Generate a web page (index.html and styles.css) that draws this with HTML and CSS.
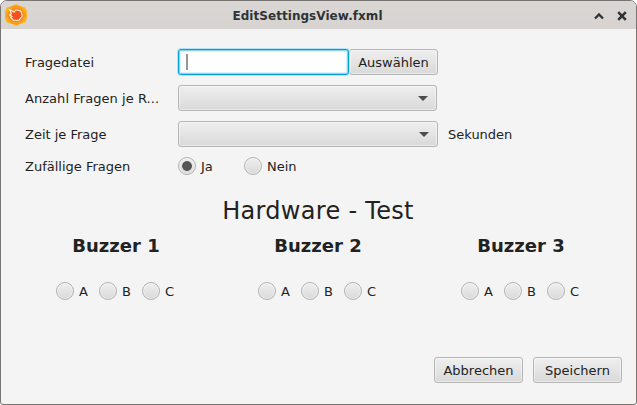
FILE: index.html
```html
<!DOCTYPE html>
<html lang="de">
<head>
<meta charset="utf-8">
<title>EditSettingsView.fxml</title>
<link rel="stylesheet" href="styles.css">
</head>
<body>
<div class="window">
  <header class="titlebar">
    <svg class="app-icon" width="24" height="24" viewBox="0 0 24 24">
      <path d="M8 3 12 1 16 3 21 4.5 22.8 8 23 12 22.8 16 21 19.5 16 21 12 23 8 21 3 19.5 1.2 16 1 12 1.2 8 3 4.5Z" fill="#fcb017"/>
      <path d="M8 3h8l3 4 3.500 5-3.500 5-3 4H8l-3-4-3.500-5L5 7Z" fill="#f99c1c"/>
      <path d="M5.500 7 12 4.500 18.500 7 20 12 18.500 17 12 19.500 5.500 17 4 12Z" fill="#f68a24"/>
      <path d="M5.500 6.500 10.300 9.300 12 6.800 17 8.300 18.300 13 15 17.200 9.500 17.200 6.500 14.500 8.200 13.500 5.500 12 7.500 10.800Z" fill="#f4511e" stroke="#fff0dc" stroke-width="1.100" stroke-linejoin="round"/>
    </svg>
    <h1 class="title">EditSettingsView.fxml</h1>
    <div class="controls">
      <svg width="10" height="10" viewBox="0 0 10 10"><path d="M1 7.500 5 3.500 9 7.500" fill="none" stroke="#2e3436" stroke-width="2.400"/></svg>
      <svg width="10" height="10" viewBox="0 0 10 10"><path d="M1.200 1.200 8.800 8.800M8.800 1.200 1.200 8.800" fill="none" stroke="#2e3436" stroke-width="2.600"/></svg>
    </div>
  </header>
  <main class="content">
    <div class="row">
      <span class="label">Fragedatei</span>
      <div class="field"><span class="caret"></span></div>
      <button class="button choose">Auswählen</button>
    </div>
    <div class="row">
      <span class="label wide">Anzahl Fragen je R...</span>
      <div class="combo narrow"><span class="arrow"></span></div>
    </div>
    <div class="row">
      <span class="label">Zeit je Frage</span>
      <div class="combo"><span class="arrow"></span></div>
      <span class="unit">Sekunden</span>
    </div>
    <div class="row radios">
      <span class="label">Zufällige Fragen</span>
      <span class="radio first"><i class="dot selected"></i><span>Ja</span></span>
      <span class="radio"><i class="dot"></i><span>Nein</span></span>
    </div>
    <h2 class="heading">Hardware - Test</h2>
    <div class="buzzers">
      <section class="buzzer">
        <h3>Buzzer 1</h3>
        <div class="keys"><span class="radio"><i class="dot"></i><span>A</span></span><span class="radio"><i class="dot"></i><span>B</span></span><span class="radio"><i class="dot"></i><span>C</span></span></div>
      </section>
      <section class="buzzer">
        <h3>Buzzer 2</h3>
        <div class="keys"><span class="radio"><i class="dot"></i><span>A</span></span><span class="radio"><i class="dot"></i><span>B</span></span><span class="radio"><i class="dot"></i><span>C</span></span></div>
      </section>
      <section class="buzzer">
        <h3>Buzzer 3</h3>
        <div class="keys"><span class="radio"><i class="dot"></i><span>A</span></span><span class="radio"><i class="dot"></i><span>B</span></span><span class="radio"><i class="dot"></i><span>C</span></span></div>
      </section>
    </div>
    <footer class="actions">
      <button class="button">Abbrechen</button>
      <button class="button">Speichern</button>
    </footer>
  </main>
</div>
</body>
</html>
```
FILE: styles.css
```css
* { box-sizing: border-box; }
body {
  margin: 0;
  background: #fff;
  color: #222;
  font: 13px/18px "DejaVu Sans", sans-serif;
}
h1, h2, h3 { margin: 0; }
.window {
  width: 637px;
  height: 405px;
  border: 1px solid #777472;
  border-radius: 7px 7px 3px 3px;
  background: #f4f4f4;
  overflow: hidden;
  display: flex;
  flex-direction: column;
}
.titlebar {
  height: 28px;
  flex: none;
  background: linear-gradient(#dad6d3, #d7d3d0);
  display: grid;
  grid-template-columns: 49px 1fr 71px;
  align-items: center;
}
.app-icon { margin-left: 3px; }
.title {
  padding-top: 1px;
  text-align: center;
  font-size: 12px;
  letter-spacing: .05px;
  color: #2e3436;
}
.controls {
  display: flex;
  justify-content: flex-end;
  gap: 13px;
  padding: 1px 9px 0 0;
}
.content {
  flex: 1;
  display: flex;
  flex-direction: column;
  padding: 20px 14px 21px 24px;
}
.row {
  display: flex;
  align-items: center;
  height: 26px;
  margin-bottom: 10px;
}
.label { width: 153px; padding-top: 2px; white-space: nowrap; }
.label.wide { letter-spacing: .05px; }
.field {
  width: 171px;
  height: 26px;
  border: 1px solid #039ed3;
  border-radius: 3px;
  background: #fff;
  box-shadow: 0 0 0 1px #b5e3f2, inset 0 0 0 1px #8dd3ea, inset 0 0 0 2px #daf2fa;
  padding: 4px 0 0 7px;
  z-index: 1;
}
.caret { display: block; width: 2px; height: 16px; background: #969696; }
.button, .combo {
  height: 26px;
  border: 1px solid #b5b5b5;
  border-radius: 3px;
  background: linear-gradient(#efefef, #d9d9d9);
  box-shadow: inset 0 0 0 1px rgba(255, 255, 255, .45);
}
.button {
  width: 89px;
  padding: 2px 0 0;
  font: inherit;
  color: inherit;
}
.combo {
  width: 260px;
  display: flex;
  align-items: center;
  justify-content: flex-end;
  padding-right: 8px;
}
.combo.narrow { width: 259px; }
.arrow {
  border: 5px solid transparent;
  border-top: 5px solid #4c4c4c;
  border-bottom: 0;
}
.unit { margin-left: 10px; padding-top: 2px; }
.radios { height: 18px; margin: 0; }
.radio { display: flex; align-items: center; gap: 5px; }
.radio span { padding-top: 2px; }
.radio.first { width: 66px; }
.dot {
  width: 18px;
  height: 18px;
  border: 1px solid #b2b2b2;
  border-radius: 50%;
  background: linear-gradient(#efefef, #d9d9d9);
  box-shadow: inset 0 0 0 1px rgba(255, 255, 255, .45);
}
.dot.selected {
  background: radial-gradient(circle, #555 4.5px, transparent 5.3px), linear-gradient(#efefef, #d9d9d9);
}
.heading {
  width: 586px;
  margin-top: 21px;
  text-align: center;
  font-size: 24px;
  font-weight: normal;
  letter-spacing: .3px;
  line-height: 30px;
}
.buzzers {
  display: grid;
  grid-template-columns: 202px 203px 202px;
  margin: 8px 0 0 -10px;
}
.buzzer h3 {
  width: 202px;
  text-align: center;
  font-size: 18px;
  line-height: 24px;
}
.keys {
  display: flex;
  padding-left: 41px;
  margin-top: 23px;
}
.keys .radio { width: 43px; }
.actions {
  display: flex;
  justify-content: flex-end;
  gap: 10px;
  margin-top: auto;
}
```
